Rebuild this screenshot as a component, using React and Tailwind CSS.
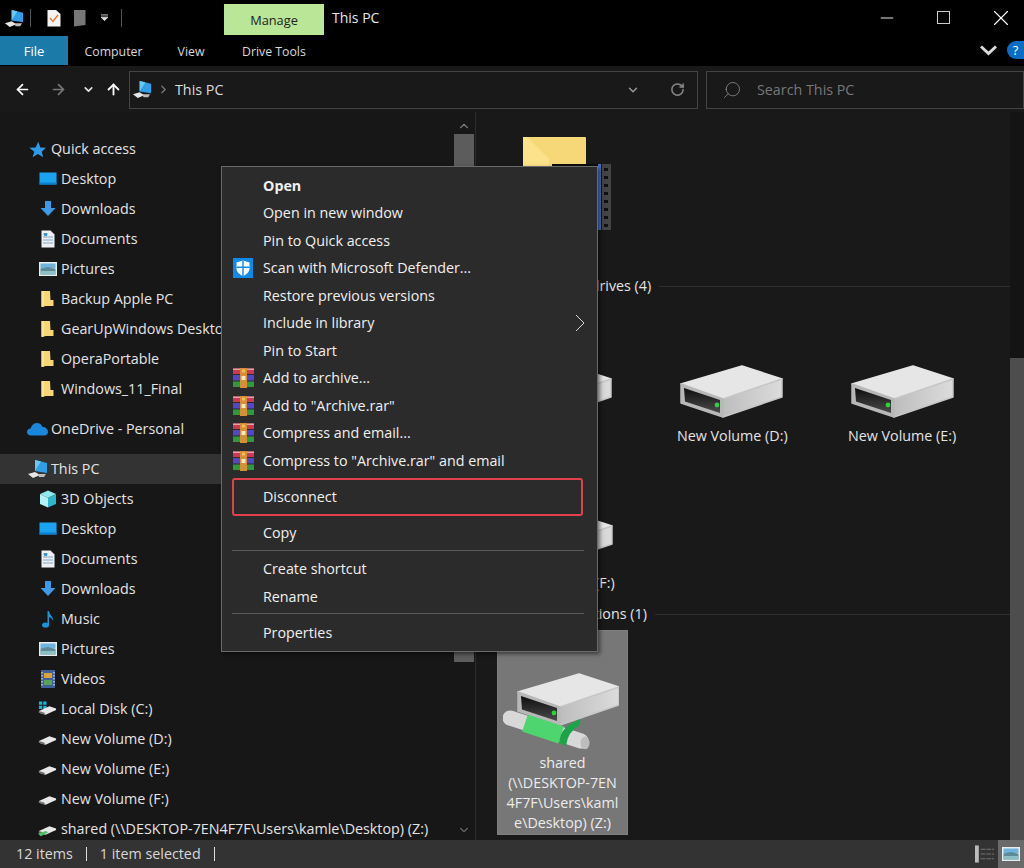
import React from "react";
import { ArrowLeft, ArrowRight, ArrowUp, ChevronDown, ChevronRight, RotateCw, Search, Minus, X } from "lucide-react";

function PcIcon({ size = 22 }) {
  return (
    <svg width={size} height={size} viewBox="0 0 22 22" className="shrink-0">
      <path d="M8 2 L20 5 V15 L8 13 Z" fill="#2f9fe6" />
      <path d="M8 2 L14 3.5 L8 13 Z" fill="#6cc6f5" />
      <path d="M1 16 L8 14 L13 17 L6 20 Z" fill="#e6e6e6" />
      <path d="M11 16 L19 16 L17 19 L12 19 Z" fill="#bdbdbd" />
    </svg>
  );
}

function Folder() {
  return (
    <svg width="13" height="18" viewBox="0 0 13 18" className="shrink-0">
      <path d="M0.5 1 H9 L9.5 10 H12.5 V16 H5 L0.5 17 Z" fill="#f6d675" />
      <path d="M0.5 1 H3 V16.4 L0.5 17 Z" fill="#fbe49a" />
    </svg>
  );
}

function Desktop() {
  return (
    <svg width="18" height="14" viewBox="0 0 18 14" className="shrink-0">
      <rect x="0.5" y="0.5" width="17" height="12" fill="#1aa3f0" />
      <rect x="0.5" y="10.5" width="17" height="2" fill="#0b7fd0" />
    </svg>
  );
}

function Download() {
  return (
    <svg width="16" height="16" viewBox="0 0 16 16" className="shrink-0">
      <path d="M5 0 H11 V7 H15.5 L8 15 L0.5 7 H5 Z" fill="#3d9ae8" />
    </svg>
  );
}

function Doc() {
  return (
    <svg width="14" height="18" viewBox="0 0 14 18" className="shrink-0">
      <path d="M0.5 0.5 H9.5 L13.5 4.5 V17.5 H0.5 Z" fill="#eef1f4" />
      <path d="M2 4 H7 M2 7 H12 M2 10 H12 M2 13 H12" stroke="#7da6c8" strokeWidth="1" />
      <path d="M3 3 H6 V6 H3 Z" fill="#3d8fd6" />
    </svg>
  );
}

function Pic() {
  return (
    <svg width="18" height="14" viewBox="0 0 18 14" className="shrink-0">
      <rect x="0" y="0" width="18" height="14" fill="#e8edf0" />
      <rect x="1.5" y="1.5" width="15" height="5" fill="#6fb4dc" />
      <path d="M1.5 6.5 L9 5 L16.5 7 V12.5 H1.5 Z" fill="#5d8a96" />
      <path d="M1.5 9 L16.5 9 V12.5 H1.5 Z" fill="#8cc0c4" />
    </svg>
  );
}

function Cube() {
  return (
    <svg width="18" height="18" viewBox="0 0 18 18" className="shrink-0">
      <path d="M9 0.5 L17 4 L9 8 L1 4 Z" fill="#8fe9ee" />
      <path d="M1 4 L9 8 V17.5 L1 14 Z" fill="#b7f2f3" />
      <path d="M17 4 L9 8 V17.5 L17 14 Z" fill="#2eb7cb" />
    </svg>
  );
}

function Music() {
  return (
    <svg width="14" height="18" viewBox="0 0 14 18" className="shrink-0">
      <ellipse cx="4.5" cy="15" rx="3.5" ry="2.6" fill="#1c94d8" />
      <path d="M6.5 1 H8 C8.5 5 12 6 12.5 11 C11 8.5 9.5 7.5 8 7 V15 H6.5 Z" fill="#1c94d8" />
    </svg>
  );
}

function Videos() {
  return (
    <svg width="14" height="18" viewBox="0 0 14 18" className="shrink-0">
      <rect width="14" height="18" fill="#3f5f96" />
      <rect x="3" y="3" width="8" height="5" fill="#d7a53c" />
      <rect x="3" y="10" width="8" height="5" fill="#5aa05a" />
      <path d="M1 2 V16 M13 2 V16" stroke="#dfe5ee" strokeWidth="1.2" strokeDasharray="1.5 1.5" />
    </svg>
  );
}

function SmallDrive({ net, win }) {
  return (
    <svg width="19" height="16" viewBox="0 0 20 16" className="shrink-0">
      {win && <path d="M1 0 H4.5 V3.5 H1 Z M5.5 0 H9 V3.5 H5.5 Z M1 4.5 H4.5 V8 H1 Z M5.5 4.5 H9 V8 H5.5 Z" fill="#18b5d8" />}
      <path d="M1 10 L12 5 L19 7.5 V9 L8 14 L1 12 Z" fill="#e8e8e8" />
      <path d="M1 10 L7 12 V14 L1 12 Z" fill="#6f6f6f" />
      {net && <path d="M0 13 L8 10 L11 11.5 L3 15.5 Z" fill="#4fc36a" />}
    </svg>
  );
}

function Star() {
  return (
    <svg width="17" height="17" viewBox="0 0 24 24" className="shrink-0">
      <path d="M13 1 L16 9 L24 9.5 L18 15 L20 23 L12.5 18.5 L5 23 L7.5 15 L0.5 9.5 L9.5 9 Z" fill="#2f9be8" />
    </svg>
  );
}

function Cloud() {
  return (
    <svg width="21" height="14" viewBox="0 0 21 14" className="shrink-0">
      <path d="M4 13.5 C1.5 13.5 0 12 0 10 C0 8 1.5 6.5 3.5 6.5 C4.5 3 7 1 10 1 C12.5 1 14.5 2.5 15.5 5 C18.5 5 21 7 21 10 C21 12 19.5 13.5 17.5 13.5 Z" fill="#1a86dc" />
    </svg>
  );
}

function Shield() {
  return (
    <svg width="20" height="20" viewBox="0 0 20 20" className="shrink-0">
      <rect width="20" height="20" fill="#0f8ae6" />
      <path d="M10 2.5 L16.5 4.5 V10 C16.5 14 13.5 16.5 10 18 C6.5 16.5 3.5 14 3.5 10 V4.5 Z" fill="#fff" />
      <path d="M9.3 2.5 H10.7 V18 H9.3 Z M3.5 8.6 H16.5 V10 H3.5 Z" fill="#0f8ae6" />
    </svg>
  );
}

function Rar() {
  return (
    <svg width="21" height="20" viewBox="0 0 21 20" className="shrink-0">
      <rect y="0.5" width="21" height="5.5" fill="#c73a58" />
      <rect y="0.5" width="21" height="1.5" fill="#e8a0ae" />
      <rect y="7" width="21" height="5.5" fill="#5148c8" />
      <rect y="13.5" width="21" height="5.5" fill="#2e9a3f" />
      <rect x="7" y="0" width="7" height="20" fill="#d68f32" />
      <rect x="8.5" y="8" width="4" height="4" fill="#f5e8b8" />
      <rect x="9" y="1.5" width="3" height="3" fill="#f2c04e" />
    </svg>
  );
}

// drive body, origin at the front-left corner of the box
function DriveBody() {
  return (
    <g strokeLinejoin="round">
      <path d="M1 19 L62 1 L102 14 L43 34 Z" fill="#e6e6e6" stroke="#e6e6e6" strokeWidth="1.5" />
      <path d="M43 34 L102 14 V32 L43 52 Z" fill="url(#driveSide)" stroke="#c6c6c6" strokeWidth="1.5" />
      <path d="M1 19 L43 34 V52 L1 38 Z" fill="#b8b8b8" stroke="#b8b8b8" strokeWidth="1.5" />
      <path d="M4 23 L40 35 V48 L5 36.5 Z" fill="url(#driveFace)" />
      <circle cx="37" cy="40" r="2.4" fill="#2fd13a" />
    </g>
  );
}

function DriveDefs() {
  return (
    <defs>
      <linearGradient id="driveSide" x1="0" y1="0" x2="1" y2="0">
        <stop offset="0" stopColor="#bdbdbd" />
        <stop offset="1" stopColor="#dcdcdc" />
      </linearGradient>
      <linearGradient id="driveFace" x1="0" y1="0" x2="0" y2="1">
        <stop offset="0" stopColor="#0f0f0f" />
        <stop offset="1" stopColor="#4a4a4a" />
      </linearGradient>
    </defs>
  );
}

function BigDrive() {
  return (
    <svg width="103" height="54" viewBox="0 0 103 54" className="shrink-0">
      <DriveDefs />
      <DriveBody />
    </svg>
  );
}

function NetDrive() {
  return (
    <svg width="116" height="76" viewBox="0 0 116 76" className="shrink-0 -ml-[3px]">
      <DriveDefs />
      <g transform="translate(14 0)">
        <DriveBody />
      </g>
      <path d="M7 45 L78 68" stroke="#d8d8d8" strokeWidth="15" strokeLinecap="round" />
      <ellipse cx="82" cy="70" rx="4.5" ry="6.5" fill="#bdbdbd" />
      <path d="M22 50 L58 62" stroke="#4fd56f" strokeWidth="18" />
      <path d="M56 70 Q57 53 78 46 L76 53 Q65 58 63 73 Z" fill="#1ea34a" />
    </svg>
  );
}

function FolderBig() {
  return (
    <svg width="90" height="95" viewBox="0 0 90 95">
      <path d="M0 0 H62 Q63 0 63 1 V29 H0 Z" fill="#f7d878" />
      <path d="M0 0 H4 L26 22 V29 H0 Z" fill="#fde28c" />
      <rect x="29" y="27" width="46" height="3" fill="#0d0d0d" />
      <rect x="75" y="27" width="3" height="66" fill="#4a6fc0" />
      <rect x="79" y="27" width="9" height="66" fill="#444444" />
      <path d="M81 31 h4 v3 h-4 Z M81 39 h4 v3 h-4 Z M81 47 h4 v3 h-4 Z M81 55 h4 v3 h-4 Z M81 63 h4 v3 h-4 Z M81 71 h4 v3 h-4 Z M81 79 h4 v3 h-4 Z M81 87 h4 v3 h-4 Z" fill="#111111" />
    </svg>
  );
}

const navTop = [
  [<Desktop />, "Desktop"],
  [<Download />, "Downloads"],
  [<Doc />, "Documents"],
  [<Pic />, "Pictures"],
  [<Folder />, "Backup Apple PC"],
  [<Folder />, "GearUpWindows Desktop"],
  [<Folder />, "OperaPortable"],
  [<Folder />, "Windows_11_Final"],
];

const navPc = [
  [<Cube />, "3D Objects"],
  [<Desktop />, "Desktop"],
  [<Doc />, "Documents"],
  [<Download />, "Downloads"],
  [<Music />, "Music"],
  [<Pic />, "Pictures"],
  [<Videos />, "Videos"],
  [<SmallDrive win />, "Local Disk (C:)"],
  [<SmallDrive />, "New Volume (D:)"],
  [<SmallDrive />, "New Volume (E:)"],
  [<SmallDrive />, "New Volume (F:)"],
  [<SmallDrive net />, "shared (\\\\DESKTOP-7EN4F7F\\Users\\kamle\\Desktop) (Z:)"],
];

function NavRow({ icon, label, top, active }) {
  return (
    <div className={`flex items-center whitespace-nowrap ${top ? "h-[30px] pl-6" : "h-[30px] pl-[38px]"} ${active ? "bg-[#333333]" : ""}`}>
      <span className={`flex justify-center items-center shrink-0 ${top ? "w-[27px]" : "w-[23px] pr-[4px]"}`}>{icon}</span>
      <span>{label}</span>
    </div>
  );
}

function Sep() {
  return <div className="h-px bg-[#5a5a5a] ml-[10px] mr-[13px]" />;
}

function MenuItem({ icon, label, bold, arrow }) {
  return (
    <div className="relative flex items-center h-[27.5px] pl-[11px]">
      <span className="w-[30px] shrink-0 flex items-center">{icon}</span>
      <span className={bold ? "font-bold" : ""}>{label}</span>
      {arrow && (
        <svg width="10" height="18" viewBox="0 0 10 18" className="absolute right-[12px] top-[4px]">
          <path d="M1 1 L9 9 L1 17" fill="none" stroke="#d8d8d8" strokeWidth="1" />
        </svg>
      )}
    </div>
  );
}

function Tile({ label, className = "" }) {
  return (
    <div className={`flex flex-col items-start ${className}`}>
      <BigDrive />
      <span className="mt-[7px] -ml-[3px] whitespace-nowrap">{label}</span>
    </div>
  );
}

export default function App() {
  return (
    <div className="relative w-[1024px] h-[868px] overflow-hidden bg-[#191919] text-[#e4e4e4] text-[14.3px] leading-5 font-['Open_Sans','Liberation_Sans',sans-serif] flex flex-col">
      {/* title bar and ribbon tabs */}
      <div className="h-[66px] bg-black shrink-0 flex flex-col">
        <div className="h-[35px] flex items-start">
          <div className="flex items-center h-[35px] w-[224px] pt-px pl-[4px]">
            <PcIcon size={21} />
            <div className="w-px h-[18px] bg-[#555] ml-[5px]" />
            <svg width="14" height="18" viewBox="0 0 14 18" className="ml-[16px]">
              <path d="M0.5 1 H9 L13.5 5 V17.5 H0.5 Z" fill="#f3f3f3" />
              <path d="M3 9 L6 12.5 L11 6" stroke="#e8772e" strokeWidth="1.4" fill="none" />
            </svg>
            <svg width="12" height="17" viewBox="0 0 12 17" className="ml-[13px]">
              <path d="M0 0 H11.5 V15 L0 16.5 Z" fill="#777" />
            </svg>
            <svg width="7" height="8" viewBox="0 0 8 8" className="ml-[15px]">
              <path d="M0 0.5 H8 M0 3 H8 L4 7 Z" stroke="#ddd" fill="#ddd" strokeWidth="1" />
            </svg>
            <div className="w-px h-[18px] bg-[#555] ml-[13px]" />
          </div>
          <div className="w-[100px] h-[31px] mt-1 bg-[#b9e797] text-[#222] flex items-center justify-center text-[12.8px]">Manage</div>
          <div className="ml-2 h-[35px] flex items-center text-[#e8e8e8] text-[14px]">This PC</div>
          <div className="ml-auto flex items-center h-[35px] mr-[10px]">
            <Minus size={20} strokeWidth={1.1} className="text-white" />
            <div className="w-[13px] h-[13px] border border-[#cccccc] ml-[40px]" />
            <X size={26} strokeWidth={1} className="text-white ml-[38px]" />
          </div>
        </div>
        <div className="h-[31px] flex items-center text-[12.3px] text-[#d8d8d8]">
          <div className="w-[68px] h-[29px] bg-[#1c7aa8] text-white flex items-center justify-center text-[13px]">File</div>
          <div className="w-[91px] text-center pt-[2px]">Computer</div>
          <div className="ml-[9px] flex pt-[2px]">
            <span className="w-[46px] text-center">View</span>
            <span className="ml-[28px]">Drive Tools</span>
          </div>
          <div className="ml-auto flex items-center h-full">
            <svg width="17" height="11" viewBox="0 0 17 11" className="mr-[10px] -mt-[1px]">
              <path d="M1 1.5 L8.5 8.5 L16 1.5" fill="none" stroke="#dddddd" strokeWidth="3" />
            </svg>
            <div className="w-[17px] h-[18px] rounded-l-full bg-[#0b6cc4] text-white text-[13px] flex items-center justify-center -mt-[2px]">?</div>
          </div>
        </div>
      </div>

      {/* address row */}
      <div className="h-[46px] shrink-0 flex items-center pt-px">
        <div className="w-[129px] flex items-center shrink-0 h-full">
          <ArrowLeft size={17} strokeWidth={2.4} className="text-white ml-[14px]" />
          <ArrowRight size={17} strokeWidth={2.4} className="text-[#777] ml-[19px]" />
          <ChevronDown size={13} strokeWidth={3} className="text-[#e4e4e4] ml-[15px]" />
          <ArrowUp size={17} strokeWidth={2.6} className="text-white ml-[10px]" />
        </div>
        <div className="w-[569px] h-[38px] border border-[#444] flex items-center pl-[2px]">
          <PcIcon size={21} />
          <ChevronRight size={13} strokeWidth={2.5} className="text-[#777] ml-[4px]" />
          <span className="ml-[5px] text-[#dcdcdc]">This PC</span>
          <ChevronDown size={14} strokeWidth={2.5} className="text-[#999] ml-auto mr-[30px]" />
          <RotateCw size={15} strokeWidth={2.4} className="text-[#888] mr-[12px]" />
        </div>
        <div className="w-[318px] h-[38px] ml-[8px] border border-[#444] flex items-center">
          <Search size={20} strokeWidth={1} className="text-[#888] ml-[15px] -scale-x-100" />
          <span className="ml-[15px] text-[#777]">Search This PC</span>
        </div>
      </div>

      {/* main area */}
      <div className="flex-1 min-h-0 flex">
        <div className="w-[452px] shrink-0 overflow-hidden pt-[22px] bg-[#171717]">
          <NavRow top icon={<Star />} label="Quick access" />
          {navTop.map(([icon, label], i) => <NavRow key={i} icon={icon} label={label} />)}
          <div className="h-[10px]" />
          <NavRow top icon={<Cloud />} label="OneDrive - Personal" />
          <div className="h-[10px]" />
          <NavRow top active icon={<PcIcon size={22} />} label="This PC" />
          {navPc.map(([icon, label], i) => <NavRow key={i} icon={icon} label={label} />)}
        </div>
        <div className="w-[23px] shrink-0 bg-[#171717] flex flex-col items-center pt-[7px]">
          <ChevronDown size={14} className="text-[#777] rotate-180" />
          <div className="w-[20px] h-[528px] mt-px bg-[#5c5c5c]" />
          <ChevronDown size={14} className="text-[#666] mt-auto mb-[3px]" />
        </div>
        <div className="w-px bg-[#2b2b2b] shrink-0" />
        <div className="flex-1 min-w-0">
          <div className="pl-[47px] pt-[25px] h-[160px]">
            <FolderBig />
          </div>
          <div className="pl-[31px] flex items-center h-[28px]">
            <span className="whitespace-nowrap">Devices and drives (4)</span>
            <div className="flex-1 h-px bg-[#2e2e2e] ml-2" />
          </div>
          <div className="grid grid-cols-[171px_171px_171px] pl-[33px] pt-[65px]">
            <Tile label="Local Disk (C:)" />
            <Tile label="New Volume (D:)" />
            <Tile label="New Volume (E:)" />
            <Tile label="New Volume (F:)" className="mt-[66px] ml-px" />
          </div>
          <div className="pl-[30px] flex items-center h-[28px] mt-[7px]">
            <span className="whitespace-nowrap">Network locations (1)</span>
            <div className="flex-1 h-px bg-[#2e2e2e] ml-2" />
          </div>
          <div className="ml-[21px] mt-[2px] w-[131px] h-[205px] bg-[#777777] flex flex-col items-center pt-[42px] text-center text-[#ececec] border border-[#808080]">
            <NetDrive />
            <span className="mt-[4px] leading-5 whitespace-nowrap">
              shared<br />(\\DESKTOP-7EN<br />4F7F\Users\kaml<br />e\Desktop) (Z:)
            </span>
          </div>
        </div>
        <div className="w-[14px] shrink-0 flex flex-col">
          <div className="h-[246px] bg-[#141414]" />
          <div className="flex-1 bg-[#4d4d4d]" />
        </div>
      </div>

      {/* status bar */}
      <div className="h-[28px] shrink-0 bg-[#333333] flex items-center text-[#d8d8d8] pl-4">
        <span>12 items</span>
        <div className="w-px h-[14px] bg-[#ddd] mx-[13px]" />
        <span>1 item selected</span>
        <div className="w-px h-[14px] bg-[#ddd] ml-[13px]" />
        <div className="ml-auto flex items-center h-full">
          <svg width="19" height="18" viewBox="0 0 20 18">
            <rect width="4" height="18" fill="#bbb" />
            <path d="M6 4 H20 M6 9 H20 M6 14 H20" stroke="#777" strokeDasharray="5 1" />
          </svg>
          <div className="ml-[4px] w-[26px] h-full bg-[#6a6a6a] flex items-center justify-center"><Pic /></div>
        </div>
      </div>

      {/* context menu */}
      <div className="absolute left-[221px] top-[166px] w-[377px] h-[486px] bg-[#2b2b2b] border border-[#6a6a6a] text-[#f0f0f0] pt-[5px] shadow-[2px_2px_4px_rgba(0,0,0,0.5)]">
        <MenuItem bold label="Open" />
        <MenuItem label="Open in new window" />
        <MenuItem label="Pin to Quick access" />
        <MenuItem icon={<Shield />} label="Scan with Microsoft Defender..." />
        <MenuItem label="Restore previous versions" />
        <MenuItem arrow label="Include in library" />
        <MenuItem label="Pin to Start" />
        <MenuItem icon={<Rar />} label="Add to archive..." />
        <MenuItem icon={<Rar />} label={'Add to "Archive.rar"'} />
        <MenuItem icon={<Rar />} label={"Compress and email..."} />
        <MenuItem icon={<Rar />} label={'Compress to "Archive.rar" and email'} />
        <div className="mt-[3px] ml-[10px] mr-[14px] h-[38px] border-2 border-[#e0414d] rounded-[3px] flex items-center pl-[29px] -mb-px">Disconnect</div>
        <div className="h-[5px]" />
        <MenuItem label="Copy" />
        <div className="h-[3px]" />
        <Sep />
        <div className="h-[4px]" />
        <MenuItem label="Create shortcut" />
        <div className="h-px" />
        <MenuItem label="Rename" />
        <div className="h-[2px]" />
        <Sep />
        <div className="h-[5px]" />
        <MenuItem label="Properties" />
      </div>
    </div>
  );
}
